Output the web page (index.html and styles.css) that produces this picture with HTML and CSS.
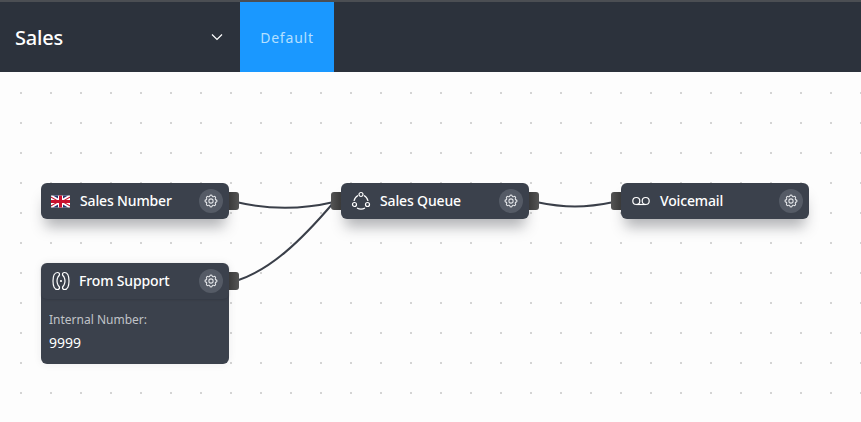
FILE: index.html
```html
<!DOCTYPE html>
<html lang="en">
<head>
    <meta charset="UTF-8">
    <title>Sales</title>
    <link rel="stylesheet" href="styles.css">
</head>
<body>
    <!-- Shared gear icon -->
    <svg class="defs" width="0" height="0">
        <symbol id="gear" viewBox="0 0 24 24">
            <path d="M10.325 4.317c.426-1.756 2.924-1.756 3.35 0a1.724 1.724 0 0 0 2.573 1.066c1.543-.94 3.31.826 2.37 2.37a1.724 1.724 0 0 0 1.065 2.572c1.756.426 1.756 2.924 0 3.35a1.724 1.724 0 0 0-1.066 2.573c.94 1.543-.826 3.31-2.37 2.37a1.724 1.724 0 0 0-2.572 1.065c-.426 1.756-2.924 1.756-3.35 0a1.724 1.724 0 0 0-2.573-1.066c-1.543.94-3.31-.826-2.37-2.37a1.724 1.724 0 0 0-1.065-2.572c-1.756-.426-1.756-2.924 0-3.35a1.724 1.724 0 0 0 1.066-2.573c-.94-1.543.826-3.31 2.37-2.37 1 .608 2.296.07 2.572-1.065z"/>
            <circle cx="12" cy="12" r="3.200"/>
        </symbol>
    </svg>

    <header class="header">
        <div class="flow-select">
            <span class="flow-name">Sales</span>
            <svg class="chevron" width="12" height="8" viewBox="0 0 12 8"><path d="M1 1.500l5 5 5-5"/></svg>
        </div>
        <a href="#" class="tab">Default</a>
    </header>

    <main class="canvas">
        <!-- Wires between the nodes -->
        <svg class="wires" width="861" height="350" viewBox="0 0 861 350">
            <path d="M236 130C270 138 300 138 334 130"/>
            <path d="M236 209C270 198 300 170 334 130"/>
            <path d="M536 130C565 136 585 136 614 130"/>
        </svg>

        <div class="node node-number">
            <div class="node-head">
                <svg class="flag" width="19" height="13" viewBox="0 0 19 13">
                    <rect width="19" height="12" y="0.500" fill="#fff"/>
                    <path d="M0 1.500l7 4H5L0 2.700zM19 1.500l-7 4h2l5-2.800zM0 11.500l7-4H5l-5 2.800zM19 11.500l-7-4h2l5 2.800z" fill="#c8102e"/>
                    <path d="M2 .5l5 3V.5zM17 .5l-5 3V.5zM2 12.500l5-3v3zM17 12.500l-5-3v3z" fill="#27346f"/>
                    <path d="M8 .5h3v4.500h8v3h-8v4.500H8V8H0V5h8z" fill="#c8102e"/>
                </svg>
                <span class="node-title">Sales Number</span>
                <button class="gear-btn"><svg width="16" height="16"><use href="#gear"/></svg></button>
            </div>
            <span class="port port-out"></span>
        </div>

        <div class="node node-queue">
            <div class="node-head">
                <svg class="icon" width="20" height="20" viewBox="0 0 20 20"><circle cx="10" cy="3.500" r="2"/><circle cx="3.500" cy="13.500" r="2"/><circle cx="16.500" cy="13.500" r="2"/><path d="M7 4.500A8 8 0 0 0 3 10M13 4.500A8 8 0 0 1 17 10M6 17a8 8 0 0 0 8 0"/></svg>
                <span class="node-title">Sales Queue</span>
                <button class="gear-btn"><svg width="16" height="16"><use href="#gear"/></svg></button>
            </div>
            <span class="port port-in"></span>
            <span class="port port-out"></span>
        </div>

        <div class="node node-voicemail">
            <div class="node-head">
                <svg class="icon" width="20" height="20" viewBox="0 0 20 20"><circle cx="5.300" cy="10" r="3.500"/><circle cx="14.700" cy="10" r="3.500"/><path d="M5.300 13.500h9.400"/></svg>
                <span class="node-title">Voicemail</span>
                <button class="gear-btn"><svg width="16" height="16"><use href="#gear"/></svg></button>
            </div>
            <span class="port port-in"></span>
        </div>

        <div class="node node-support">
            <div class="node-head node-head-raised">
                <svg class="icon icon-tight" width="20" height="20" viewBox="0 0 20 20"><path d="M6.500 1.500C3.500 1.500 2 5 2 10s1.500 8.500 4.500 8.500c1.500 0 2-1 2-2s-1-1.500-1.500-2.500S6 11.500 6 10s.5-3 1-4 1.500-1.500 1.500-2.500-.5-2-2-2zM13.500 1.500c3 0 4.500 3.500 4.500 8.500s-1.500 8.500-4.500 8.500c-1.500 0-2-1-2-2s1-1.500 1.500-2.500.99-2.500.99-4-.5-3-1-4-1.500-1.500-1.500-2.500.5-2 2-2z"/><circle cx="10" cy="10" r=".5"/></svg>
                <span class="node-title">From Support</span>
                <button class="gear-btn"><svg width="16" height="16"><use href="#gear"/></svg></button>
            </div>
            <div class="node-body">
                <div class="body-label">Internal Number:</div>
                <div class="body-value">9999</div>
            </div>
            <span class="port port-out"></span>
        </div>
    </main>
</body>
</html>
```

FILE: styles.css
```css
* {
    box-sizing: border-box;
    margin: 0;
    padding: 0;
    font-family: 'Noto Sans', 'Open Sans', sans-serif;
}

body {
    width: 861px;
    height: 422px;
    overflow: hidden;
    background: #fdfdfd;
}

.defs {
    position: absolute;
}

.header {
    display: flex;
    height: 72px;
    background: #2c323c;
    border-top: 2px solid #4b4e53;
}

.flow-select {
    display: flex;
    align-items: center;
    justify-content: space-between;
    width: 240px;
    padding: 0 17px 0 15px;
}

.flow-name {
    font-size: 20px;
    font-weight: 500;
    letter-spacing: -0.2px;
    color: #fff;
}

.chevron {
    fill: none;
    stroke: #fff;
    stroke-width: 1.200;
}

.tab {
    display: flex;
    align-items: center;
    justify-content: center;
    width: 94px;
    background: #1a98ff;
    color: #b5e0ff;
    font-size: 14px;
    letter-spacing: 0.8px;
    text-decoration: none;
}

.canvas {
    position: relative;
    height: 350px;
    background-image: radial-gradient(circle at 1px 1px, #d4d4d4 1.200px, transparent 1.500px);
    background-size: 30px 30px;
    background-position: 20px 20px;
}

.wires {
    position: absolute;
    top: 0;
    left: 0;
}

.wires path {
    fill: none;
    stroke: #3a3f49;
    stroke-width: 2;
}

.node {
    position: absolute;
    width: 188px;
    background: #3b414c;
    border-radius: 6px;
    box-shadow: 0 12px 14px -4px rgba(40, 44, 52, 0.35);
}

.node-number { left: 41px; top: 111px; }
.node-queue { left: 341px; top: 111px; }
.node-voicemail { left: 621px; top: 111px; }
.node-support { left: 41px; top: 191px; height: 101px; box-shadow: 0 0 8px rgba(40, 44, 52, 0.08); }

.node-head {
    display: flex;
    align-items: center;
    height: 36px;
    padding: 0 6px 0 10px;
}

.node-head-raised {
    border-radius: 6px;
    box-shadow: 0 1px 2px rgba(30, 34, 42, 0.25);
}

.flag {
    margin-right: 10px;
}

.icon {
    margin-right: 9px;
    fill: none;
    stroke: #fff;
    stroke-width: 1.200;
}

.icon-tight {
    margin-right: 8px;
}

.node-title {
    flex: 1;
    margin-top: -2px;
    font-size: 14px;
    font-weight: 500;
    letter-spacing: -0.15px;
    color: #fff;
}

.gear-btn {
    display: flex;
    align-items: center;
    justify-content: center;
    width: 24px;
    height: 24px;
    border: none;
    border-radius: 50%;
    background: #555b66;
}

.gear-btn svg {
    fill: none;
    stroke: #e4e6e9;
    stroke-width: 1.600;
}

.node-body {
    padding: 12px 8px 0;
}

.body-label {
    font-size: 12px;
    line-height: 17px;
    color: #c0c3c8;
}

.body-value {
    margin-top: 5px;
    font-size: 14px;
    line-height: 19px;
    color: #fff;
}

.port {
    position: absolute;
    top: 9px;
    width: 10px;
    height: 18px;
    background: linear-gradient(90deg, #3a3a3a, #555);
    border-radius: 2px;
}

.port-out { left: 188px; border-radius: 0 3px 3px 0; }
.port-in { left: -10px; border-radius: 3px 0 0 3px; background: linear-gradient(90deg, #555, #3a3a3a); }
```
